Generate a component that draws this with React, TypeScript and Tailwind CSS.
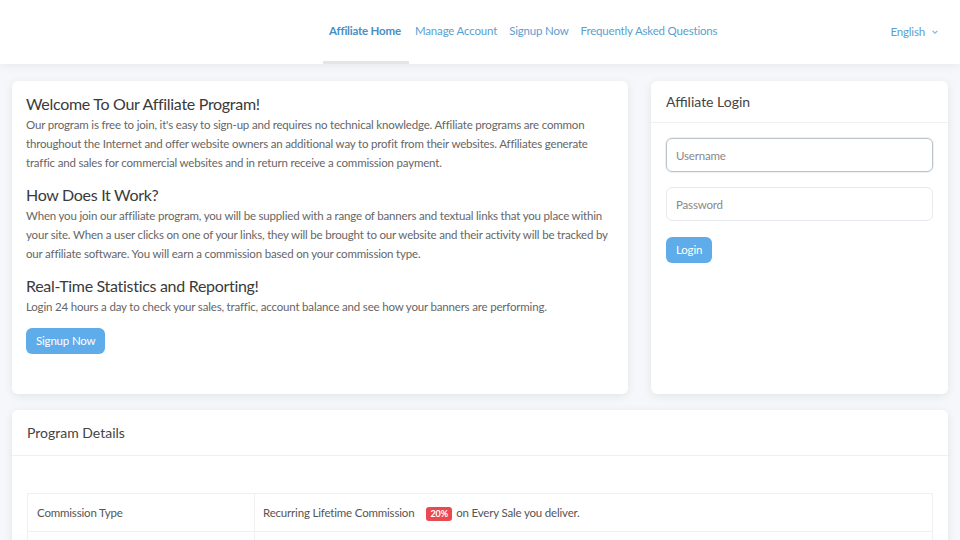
import React from "react";

export default function App() {
  const font = { fontFamily: "Lato, 'Noto Sans', sans-serif" };
  return (
    <div className="min-h-[540px] bg-[#f5f7fa] text-[#666]" style={font}>
      <header className="h-[64px] bg-white shadow-[0_2px_10px_rgba(0,0,0,0.06)] relative">
        <nav className="flex items-start h-full pl-[323px] pr-[21px]">
          <div className="flex h-full">
            <a className="px-[6px] w-[86px] h-full flex items-start pt-[22px] text-[11.5px] tracking-[-0.2px] font-bold text-[#4a8ec4] border-b-[3px] border-[#e3e5e8]">Affiliate Home</a>
            <a className="px-[6px] pt-[22px] text-[11.5px] tracking-[-0.18px] text-[#5a9fd0]">Manage Account</a>
            <a className="px-[6px] pt-[22px] text-[11.5px] tracking-[-0.18px] text-[#5a9fd0]">Signup Now</a>
            <a className="px-[6px] pt-[22px] text-[11.5px] tracking-[-0.18px] text-[#5a9fd0]">Frequently Asked Questions</a>
          </div>
          <div className="ml-auto pt-[23px] flex items-center gap-[6px] text-[11.5px] tracking-[-0.18px] text-[#5a9fd0]">
            English
            <svg width="8" height="8" viewBox="0 0 10 10" fill="none" stroke="#8ab4d6" strokeWidth="1.5"><path d="M2 3.5l3 3 3-3" /></svg>
          </div>
        </nav>
      </header>

      <main className="px-[12px] pt-[17px] flex flex-col gap-[16px]">
        <div className="flex gap-[23px]">
          <section className="w-[616px] h-[313px] bg-white rounded-[6px] shadow-[0_2px_10px_rgba(0,0,0,0.08)] px-[14px] pt-[13px]">
            <h2 className="text-[16px] tracking-[-0.3px] text-[#3a3a3a] leading-[20px]">Welcome To Our Affiliate Program!</h2>
            <p className="text-[11.5px] tracking-[-0.18px] leading-[19px] mt-[1px]">Our program is free to join, it's easy to sign-up and requires no technical knowledge. Affiliate programs are common throughout the Internet and offer website owners an additional way to profit from their websites. Affiliates generate traffic and sales for commercial websites and in return receive a commission payment.</p>
            <h2 className="text-[16px] tracking-[-0.3px] text-[#3a3a3a] leading-[20px] mt-[13px]">How Does It Work?</h2>
            <p className="text-[11.5px] tracking-[-0.18px] leading-[19px] mt-[1px]">When you join our affiliate program, you will be supplied with a range of banners and textual links that you place within your site. When a user clicks on one of your links, they will be brought to our website and their activity will be tracked by our affiliate software. You will earn a commission based on your commission type.</p>
            <h2 className="text-[16px] tracking-[-0.3px] text-[#3a3a3a] leading-[20px] mt-[13px]">Real-Time Statistics and Reporting!</h2>
            <p className="text-[11.5px] tracking-[-0.18px] leading-[19px] mt-[1px]">Login 24 hours a day to check your sales, traffic, account balance and see how your banners are performing.</p>
            <button className="mt-[12px] h-[26px] px-[10px] rounded-[6px] bg-[#5eacea] text-white text-[11.5px] tracking-[-0.18px]">Signup Now</button>
          </section>

          <section className="flex-1 h-[313px] bg-white rounded-[6px] shadow-[0_2px_10px_rgba(0,0,0,0.08)]">
            <div className="h-[42px] border-b border-[#eef0f3] px-[15px] flex items-center">
              <h3 className="text-[14px] text-[#444] -mt-[1px]">Affiliate Login</h3>
            </div>
            <div className="px-[15px] pt-[15px] flex flex-col">
              <input placeholder="Username" className="h-[34px] rounded-[6px] border border-[#b9c3cc] px-[9px] text-[11.5px] tracking-[-0.18px] placeholder-[#888] outline-none shadow-[0_0_0_1px_rgba(200,210,220,0.3)]" />
              <input placeholder="Password" className="mt-[15px] h-[34px] rounded-[6px] border border-[#e6e9ed] px-[9px] text-[11.5px] tracking-[-0.18px] placeholder-[#888] outline-none" />
              <div className="mt-[15px]">
                <button className="h-[26px] px-[10px] rounded-[6px] bg-[#5eacea] text-white text-[11.5px] tracking-[-0.18px]">Login</button>
              </div>
            </div>
          </section>
        </div>

        <section className="bg-white rounded-[6px] shadow-[0_2px_10px_rgba(0,0,0,0.08)] h-[140px]">
          <div className="h-[46px] border-b border-[#eef0f3] px-[15px] flex items-center">
            <h3 className="text-[14px] text-[#444]">Program Details</h3>
          </div>
          <div className="px-[15px] pt-[37px]">
            <table className="w-full border-collapse text-[11.5px] tracking-[-0.18px] text-[#555]">
              <tbody>
                <tr className="h-[38px]">
                  <td className="w-[227px] border border-[#eef0f3] px-[9px]">Commission Type</td>
                  <td className="border border-[#eef0f3] px-[8px]">
                    Recurring Lifetime Commission
                    <span className="ml-[12px] mr-[4px] inline-block bg-[#e9494f] text-white text-[9px] tracking-normal font-bold px-[4px] leading-[14px] rounded-[3px] align-middle">20%</span>
                    on Every Sale you deliver.
                  </td>
                </tr>
                <tr className="h-[38px]">
                  <td className="border border-[#eef0f3] px-[9px]"></td>
                  <td className="border border-[#eef0f3] px-[8px]"></td>
                </tr>
              </tbody>
            </table>
          </div>
        </section>
      </main>
    </div>
  );
}
